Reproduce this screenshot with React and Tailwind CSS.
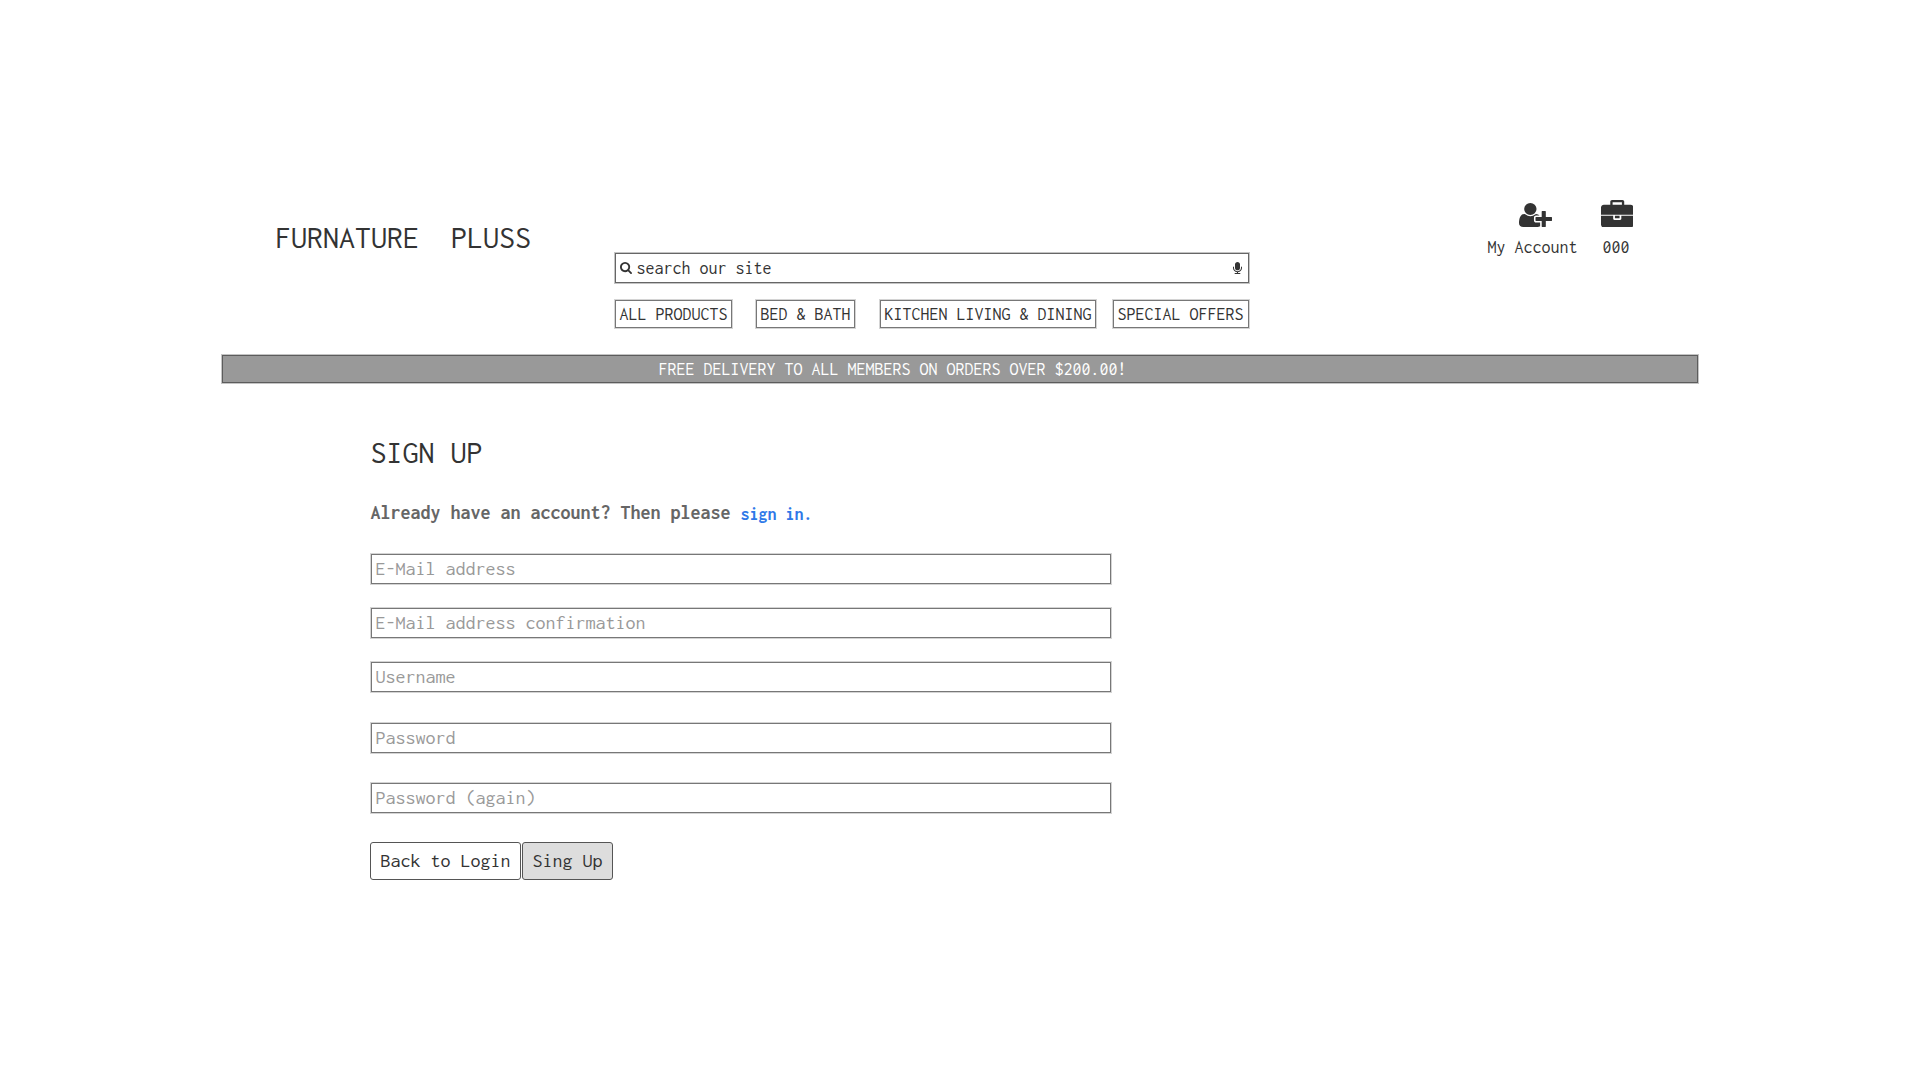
const FRAME = "border border-[#777777] outline outline-1 outline-[#d4d4d4]";

function Icon({ className, viewBox, d }) {
  return (
    <svg className={className} viewBox={viewBox} preserveAspectRatio="none" fill="currentColor" aria-hidden="true">
      <path d={d} />
    </svg>
  );
}

const USER_PLUS =
  "M704 896q-159 0-271.5-112.5t-112.5-271.5 112.5-271.5 271.5-112.5 271.5 112.5 112.5 271.5-112.5 271.5-271.5 112.5zm960 128h352q13 0 22.5 9.5t9.5 22.5v192q0 13-9.5 22.5t-22.5 9.5h-352v352q0 13-9.5 22.5t-22.5 9.5h-192q-13 0-22.5-9.5t-9.5-22.5v-352h-352q-13 0-22.5-9.5t-9.5-22.5v-192q0-13 9.5-22.5t22.5-9.5h352v-352q0-13 9.5-22.5t22.5-9.5h192q13 0 22.5 9.5t9.5 22.5v352zm-736 224q0 52 38 90t90 38h256v238q-68 50-171 50h-874q-121 0-194-69t-73-190q0-53 3.5-103.5t14-109 26.5-108.5 43-97.5 62-81 85.5-53.5 111.5-20q19 0 39 17 79 61 154.5 91.5t164.5 30.5 164.5-30.5 154.5-91.5q20-17 39-17 132 0 217 96h-223q-52 0-90 38t-38 90v192z";
const BRIEFCASE =
  "M640 256h512v-128h-512v128zM1792 864v480q0 66-47 113t-113 47h-1472q-66 0-113-47t-47-113v-480h672v160q0 26 19 45t45 19h320q26 0 45-19t19-45v-160h672zM1024 864v128h-256v-128h256zM1792 416v384h-1792v-384q0-66 47-113t113-47h352v-160q0-40 28-68t68-28h576q40 0 68 28t28 68v160h352q66 0 113 47t47 113z";
const SEARCH =
  "M1216 832q0-185-131.5-316.5t-316.5-131.5-316.5 131.5-131.5 316.5 131.5 316.5 316.5 131.5 316.5-131.5 131.5-316.5zm512 832q0 52-38 90t-90 38q-54 0-90-38l-343-342q-179 124-399 124-143 0-273.5-55.5t-225-150-150-225-55.5-273.5 55.5-273.5 150-225 225-150 273.5-55.5 273.5 55.5 225 150 150 225 55.5 273.5q0 220-124 399l343 343q37 37 37 90z";
const MICROPHONE =
  "M1472 704v128q0 221-147.5 384.5t-364.5 187.5v132h256q26 0 45 19t19 45-19 45-45 19h-640q-26 0-45-19t-19-45 19-45 45-19h256v-132q-217-24-364.5-187.5t-147.5-384.5v-128q0-26 19-45t45-19 45 19 19 45v128q0 185 131.5 316.5t316.5 131.5 316.5-131.5 131.5-316.5v-128q0-26 19-45t45-19 45 19 19 45zm-256-384v512q0 132-94 226t-226 94-226-94-94-226v-512q0-132 94-226t226-94 226 94 94 226z";

const NAV = [
  { label: "ALL PRODUCTS", box: "w-[117px]" },
  { label: "BED & BATH", box: "ml-6 w-[99px]" },
  { label: "KITCHEN LIVING & DINING", box: "ml-[25px] w-[216px]" },
  { label: "SPECIAL OFFERS", box: "ml-[17px] w-[136px]" },
];

const FIELDS = [
  { label: "E-Mail address", gap: "mt-[26px]" },
  { label: "E-Mail address confirmation", gap: "mt-6" },
  { label: "Username", gap: "mt-6" },
  { label: "Password", gap: "mt-[31px]" },
  { label: "Password (again)", gap: "mt-[30px]" },
];

function Header() {
  return (
    <header className="flex h-[355px] items-start pl-[275px] text-lg">
      <h1 className="mt-[218px] w-[340px] whitespace-pre text-[32px] leading-10">{"FURNATURE  PLUSS"}</h1>
      <div className="mt-[253px] w-[634px]">
        <div className="flex h-[30px] items-center border border-[#666666] pr-1.5 pl-1 outline outline-1 outline-[#c4c4c4]">
          <Icon className="h-3 w-3" viewBox="64 128 1664 1664" d={SEARCH} />
          <span className="ml-[4.5px] flex-1 leading-6">search our site</span>
          <Icon className="-mt-px h-3 w-[9px]" viewBox="320 0 1152 1664" d={MICROPHONE} />
        </div>
        <nav className="mt-[17px] flex">
          {NAV.map((item) => (
            <a
              key={item.label}
              className={`${FRAME} h-7 shrink-0 whitespace-nowrap pl-[3.5px] leading-[26px] ${item.box}`}
            >
              {item.label}
            </a>
          ))}
        </nav>
      </div>
      <div className="mt-[203px] ml-[238px] flex w-[92px] flex-col">
        <Icon className="ml-8 h-6 w-[33px]" viewBox="0 128 2048 1536" d={USER_PLUS} />
        <span className="mt-2 ml-[0.5px] whitespace-nowrap leading-6">My Account</span>
      </div>
      <div className="mt-[199.5px] ml-[21.5px] flex flex-col">
        <Icon className="h-[27.5px] w-[32.5px]" viewBox="0 0 1792 1504" d={BRIEFCASE} />
        <span className="mt-2 ml-0.5 leading-6">000</span>
      </div>
    </header>
  );
}

export default function App() {
  return (
    <div className="min-h-screen w-[1920px] bg-white font-['Inconsolata','Liberation_Mono',monospace] text-[#333333]">
      <Header />
      <div className="ml-[222px] h-7 w-[1476px] border border-[#5c5c5c] bg-[#999999] pl-[435.5px] text-lg leading-[26px] text-white outline outline-1 outline-[#c4c4c4]">
        FREE DELIVERY TO ALL MEMBERS ON ORDERS OVER $200.00!
      </div>
      <main className="ml-[371px] w-[740px]">
        <h2 className="-ml-[0.5px] pt-[50px] text-[32px] leading-10">SIGN UP</h2>
        <p className="-ml-[0.5px] mt-6 flex h-[31px] text-xl font-bold leading-8 text-[#666666]">
          Already have an account? Then please
          <a className="ml-2.5 pt-px text-lg leading-8 text-[#2f78e8]">sign in.</a>
        </p>
        {FIELDS.map((field) => (
          <div
            key={field.label}
            className={`${FRAME} h-[30px] pl-[3.5px] text-xl leading-7 text-[#999999] ${field.gap}`}
          >
            {field.label}
          </div>
        ))}
        <div className="mt-[29px] -ml-px flex h-[38px] gap-px text-xl">
          <button className="w-[151px] rounded-[3px] border border-[#555555]">Back to Login</button>
          <button className="w-[91px] rounded-[3px] border border-[#555555] bg-[#dddddd]">Sing Up</button>
        </div>
      </main>
    </div>
  );
}
